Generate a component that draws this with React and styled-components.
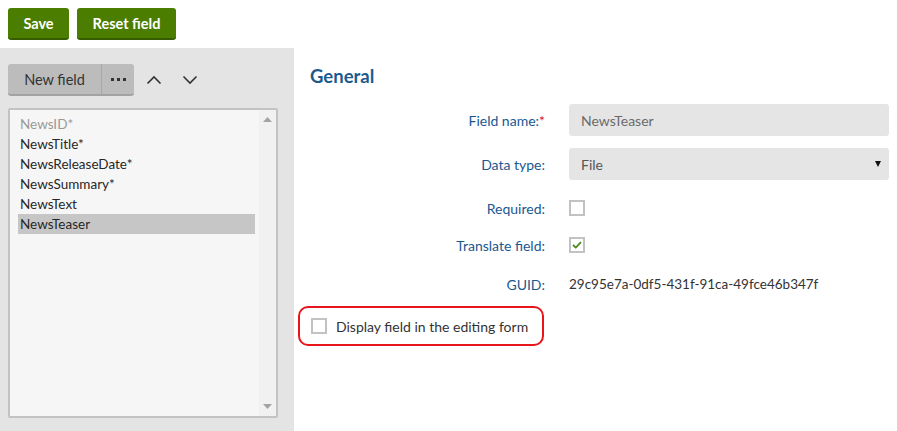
import React from "react";
import styled, { createGlobalStyle } from "styled-components";

const FONT = `Lato, "Open Sans", sans-serif`;

const GlobalStyle = createGlobalStyle`
  html, body { margin: 0; padding: 0; background: #fff; }
  body { font-family: ${FONT}; font-size: 14px; color: #333; }
  * { box-sizing: border-box; }
`;

const Page = styled.div`
  width: 897px;
  height: 431px;
  display: flex;
  flex-direction: column;
  overflow: hidden;
`;

const TopBar = styled.div`
  display: flex;
  gap: 8px;
  padding: 8px;
  height: 48px;
`;

const PrimaryButton = styled.button`
  height: 32px;
  padding: 0;
  width: ${(p) => p.$w}px;
  border: none;
  border-bottom: 2px solid #365d00;
  border-radius: 3px;
  background: #4a7d00;
  color: #fff;
  font-family: ${FONT};
  font-weight: 700;
  font-size: 14.5px;
  cursor: pointer;
`;

const Main = styled.div`
  flex: 1;
  display: flex;
  min-height: 0;
`;

const LeftPanel = styled.div`
  width: 294px;
  background: #e4e4e4;
  padding: 16px 16px 0 8px;
  display: flex;
  flex-direction: column;
`;

const Toolbar = styled.div`
  display: flex;
  align-items: center;
  height: 32px;
  margin-bottom: 12px;
`;

const SplitButton = styled.div`
  display: flex;
  height: 32px;
  border-radius: 3px;
  background: #bcbcbc;
  border-bottom: 2px solid #a3a3a3;
  overflow: hidden;
`;

const SplitPart = styled.button`
  border: none;
  background: transparent;
  height: 30px;
  padding: 0;
  font-family: ${FONT};
  font-size: 14.5px;
  color: #333;
  display: flex;
  align-items: center;
  justify-content: center;
  width: ${(p) => p.$w}px;
  & + & { border-left: 1px solid #a8a8a8; }
`;

const IconButton = styled.button`
  border: none;
  background: transparent;
  width: 36px;
  height: 32px;
  display: flex;
  align-items: center;
  justify-content: center;
  padding: 0;
`;

const ListBox = styled.div`
  width: 270px;
  height: 310px;
  background: #f6f6f6;
  border: 2px solid #c3c3c3;
  border-radius: 2px;
  display: flex;
`;

const Items = styled.div`
  flex: 1;
  padding: 4px 4px 0 8px;
`;

const Item = styled.div`
  height: 20px;
  line-height: 20px;
  padding-left: 2px;
  font-family: ${FONT};
  font-size: 13.5px;
  color: ${(p) => (p.$disabled ? "#999" : "#262626")};
  background: ${(p) => (p.$selected ? "#c6c6c6" : "transparent")};
`;

const Scrollbar = styled.div`
  width: 17px;
  background: #f1f1f1;
  display: flex;
  flex-direction: column;
  justify-content: space-between;
  align-items: center;
  padding: 7px 0;
`;

const RightPanel = styled.div`
  flex: 1;
  padding: 16px 0 0 16px;
  display: flex;
  flex-direction: column;
`;

const Heading = styled.h2`
  margin: 0 0 16px 0;
  height: 24px;
  line-height: 24px;
  font-family: ${FONT};
  font-weight: 700;
  font-size: 18.5px;
  color: #1c5a8e;
`;

const FormRow = styled.div`
  display: flex;
  align-items: center;
  gap: 24px;
  height: 32px;
  margin-top: ${(p) => p.$mt || 0}px;
`;

const Label = styled.div`
  width: 235px;
  text-align: right;
  font-family: ${FONT};
  font-size: 14px;
  color: #1a5890;
`;

const Req = styled.span`
  color: #e4121a;
`;

const Value = styled.div`
  width: 320px;
  display: flex;
  align-items: center;
  font-family: ${FONT};
  font-size: ${(p) => p.$size || 14}px;
  color: #333;
`;

const TextInput = styled.div`
  width: 100%;
  height: 32px;
  border-radius: 3px;
  background: #e5e5e5;
  padding: 0 12px;
  display: flex;
  align-items: center;
  justify-content: space-between;
  color: ${(p) => p.$color || "#6b6b6b"};
  font-family: ${FONT};
  font-size: 14px;
`;

const Arrow = styled.span`
  width: 0;
  height: 0;
  border-left: 3.5px solid transparent;
  border-right: 3.5px solid transparent;
  border-top: 6px solid #111;
  margin-right: -4px;
`;

const Checkbox = styled.span`
  width: 16px;
  height: 16px;
  border: 2px solid #c2c2c2;
  background: #fff;
  display: inline-flex;
  align-items: center;
  justify-content: center;
  flex: none;
`;

const Annotation = styled.div`
  margin: 6px 0 0 -12px;
  width: 246px;
  height: 40px;
  border: 2px solid #e8161b;
  border-radius: 10px;
  display: flex;
  align-items: center;
  gap: 9px;
  padding-left: 11px;
  font-family: ${FONT};
  font-size: 14px;
  color: #333;
`;

const Chevron = ({ up }) => (
  <svg width="16" height="10" viewBox="0 0 16 10">
    <path
      d={up ? "M1.5 8.5 L8 2 L14.5 8.5" : "M1.5 1.5 L8 8 L14.5 1.5"}
      fill="none"
      stroke="#333"
      strokeWidth="1.6"
    />
  </svg>
);

const Dots = () => (
  <svg width="15" height="3" viewBox="0 0 15 3">
    <rect x="0" y="0" width="3" height="3" fill="#333" />
    <rect x="6" y="0" width="3" height="3" fill="#333" />
    <rect x="12" y="0" width="3" height="3" fill="#333" />
  </svg>
);

const Tri = ({ up }) => (
  <svg width="9" height="5" viewBox="0 0 9 5">
    <path d={up ? "M0 5 L4.5 0 L9 5 Z" : "M0 0 L4.5 5 L9 0 Z"} fill="#a3a3a3" />
  </svg>
);

const Check = () => (
  <svg width="10" height="8" viewBox="0 0 10 8">
    <path d="M1 4 L3.8 6.6 L9 1.2" fill="none" stroke="#4a8a1a" strokeWidth="1.8" />
  </svg>
);

const fields = [
  { name: "NewsID*", disabled: true },
  { name: "NewsTitle*" },
  { name: "NewsReleaseDate*" },
  { name: "NewsSummary*" },
  { name: "NewsText" },
  { name: "NewsTeaser", selected: true },
];

export default function App() {
  return (
    <Page>
      <GlobalStyle />
      <TopBar>
        <PrimaryButton $w={61}>Save</PrimaryButton>
        <PrimaryButton $w={99}>Reset field</PrimaryButton>
      </TopBar>
      <Main>
        <LeftPanel>
          <Toolbar>
            <SplitButton>
              <SplitPart $w={93}>New field</SplitPart>
              <SplitPart $w={33}>
                <Dots />
              </SplitPart>
            </SplitButton>
            <IconButton style={{ marginLeft: 2 }}>
              <Chevron up />
            </IconButton>
            <IconButton>
              <Chevron />
            </IconButton>
          </Toolbar>
          <ListBox>
            <Items>
              {fields.map((f) => (
                <Item key={f.name} $disabled={f.disabled} $selected={f.selected}>
                  {f.name}
                </Item>
              ))}
            </Items>
            <Scrollbar>
              <Tri up />
              <Tri />
            </Scrollbar>
          </ListBox>
        </LeftPanel>
        <RightPanel>
          <Heading>General</Heading>
          <FormRow>
            <Label>
              Field name:<Req>*</Req>
            </Label>
            <Value>
              <TextInput>NewsTeaser</TextInput>
            </Value>
          </FormRow>
          <FormRow $mt={12}>
            <Label>Data type:</Label>
            <Value>
              <TextInput $color="#555">
                File
                <Arrow />
              </TextInput>
            </Value>
          </FormRow>
          <FormRow $mt={12}>
            <Label>Required:</Label>
            <Value>
              <Checkbox />
            </Value>
          </FormRow>
          <FormRow $mt={5}>
            <Label>Translate field:</Label>
            <Value>
              <Checkbox>
                <Check />
              </Checkbox>
            </Value>
          </FormRow>
          <FormRow $mt={7}>
            <Label>GUID:</Label>
            <Value $size={13.5}>29c95e7a-0df5-431f-91ca-49fce46b347f</Value>
          </FormRow>
          <Annotation>
            <Checkbox />
            Display field in the editing form
          </Annotation>
        </RightPanel>
      </Main>
    </Page>
  );
}
